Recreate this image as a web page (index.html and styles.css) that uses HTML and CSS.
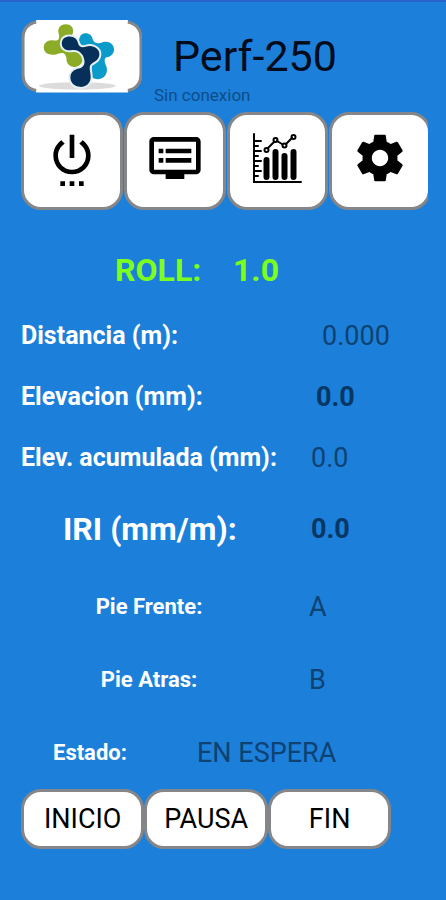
FILE: index.html
```
<!DOCTYPE html>
<html lang="es">
<head>
  <meta charset="UTF-8">
  <meta name="viewport" content="width=device-width, initial-scale=1">
  <title>Perf-250</title>
  <link rel="stylesheet" href="styles.css">
</head>
<body>

  <header class="header">
    <div class="logo">
      <svg viewBox="0 0 120 72" role="img" aria-label="Logo">
        <path class="logo-bg" d="M15 0H106V2Q118 5 118 18V54Q118 67 106 70V72H15V70Q3 67 3 54V18Q3 5 15 2Z"/>
        <path class="logo-edge" d="M15 2Q2 5 2 18V54Q2 67 15 70M106 2Q119 5 119 18V54Q119 67 106 70"/>
        <g transform="translate(17 -2) scale(.33)">
          <ellipse class="logo-shadow" cx="118" cy="204" rx="116" ry="11"/>
          <path class="logo-green" d="M83 19C98 19 107 29 105 42C104 50 100 53 100 60V80L135 110C137 125 132 145 112 147C94 148 85 138 85 122C84 108 76 102 62 107C45 114 20 112 17 92C15 74 30 65 44 67C60 70 66 64 62 48C57 32 66 19 83 19Z"/>
          <path class="logo-cyan" d="M142 46C156 46 162 54 164 64C168 78 182 78 196 72C212 68 228 78 228 94C228 108 218 117 206 118C196 122 200 134 206 148C210 168 198 184 178 184C158 182 152 170 156 154L150 90C124 82 121 72 124 60C128 50 134 46 142 46Z"/>
          <path class="logo-navy" d="M94 56C110 56 118 66 120 76C123 88 132 90 145 86C165 80 185 92 184 110C183 126 172 130 160 138C150 145 158 160 158 178C157 198 142 208 126 207C106 206 96 192 97 176C99 158 112 154 128 150C142 144 142 128 134 112C126 98 112 94 98 97C82 99 71 90 71 76C72 62 82 56 94 56Z"/>
        </g>
      </svg>
    </div>
    <div class="heading">
      <h1>Perf-250</h1>
      <p>Sin conexion</p>
    </div>
  </header>

  <nav class="toolbar">
    <button class="tile" aria-label="Encender">
      <svg viewBox="0 0 24 24"><path d="M7 24h2v-2H7v2zm4 0h2v-2h-2v2zm2-22h-2v10h2V2zm3.560 2.440l-1.450 1.450C16.840 6.940 18 8.830 18 11c0 3.310-2.690 6-6 6s-6-2.690-6-6c0-2.170 1.160-4.060 2.880-5.120L7.440 4.440C5.360 5.880 4 8.280 4 11c0 4.420 3.580 8 8 8s8-3.580 8-8c0-2.720-1.360-5.120-3.440-6.560zM15 24h2v-2h-2v2z"/></svg>
    </button>
    <button class="tile" aria-label="Datos">
      <svg viewBox="0 0 24 24"><path d="M21 3H3c-1.100 0-2 .9-2 2v12c0 1.100.9 2 2 2h5v2h8v-2h5c1.100 0 1.990-.9 1.990-2L23 5c0-1.100-.9-2-2-2zm0 14H3V5h18v12zm-2-9H8v2h11V8zm0 4H8v2h11v-2zM7 8H5v2h2V8zm0 4H5v2h2v-2z"/></svg>
    </button>
    <button class="tile" aria-label="Grafica">
      <svg class="chart" viewBox="0 0 56 56">
        <path class="axis" d="M5 4V52H52"/>
        <path class="ticks" d="M5 11H12M5 16H9M5 21H12M5 26H9M5 31H12M5 36H9M5 41H12M5 46H9"/>
        <path class="bars" d="M17.500 30V47M26.500 22V47M35.500 26V47M44.500 22V47"/>
        <path class="line" d="M19 18L25 12M28 11L33 14M37 14L43 8"/>
        <circle cx="17.500" cy="20" r="2"/>
        <circle cx="26.500" cy="10" r="2"/>
        <circle cx="35.500" cy="15.500" r="2"/>
        <circle cx="44.500" cy="7" r="2"/>
      </svg>
    </button>
    <button class="tile" aria-label="Ajustes">
      <svg viewBox="0 0 24 24"><path d="M19.430 12.980c.04-.32.07-.64.07-.98s-.03-.66-.07-.98l2.110-1.650c.19-.15.24-.42.12-.64l-2-3.460c-.12-.22-.39-.3-.61-.22l-2.490 1c-.52-.4-1.080-.73-1.690-.98l-.38-2.650C14.460 2.180 14.250 2 14 2h-4c-.25 0-.46.18-.49.42l-.38 2.650c-.61.25-1.170.59-1.690.98l-2.490-1c-.23-.09-.49 0-.61.22l-2 3.460c-.13.22-.07.49.12.64l2.110 1.650c-.04.32-.07.65-.07.98s.03.66.07.98l-2.110 1.650c-.19.15-.24.42-.12.64l2 3.460c.12.22.39.3.61.22l2.490-1c.52.4 1.080.73 1.690.98l.38 2.650c.03.24.24.42.49.42h4c.25 0 .46-.18.49-.42l.38-2.650c.61-.25 1.170-.59 1.690-.98l2.490 1c.23.09.49 0 .61-.22l2-3.460c.12-.22.07-.49-.12-.64l-2.110-1.650zM12 15.500c-1.930 0-3.500-1.570-3.500-3.500s1.570-3.500 3.500-3.500 3.500 1.570 3.500 3.500-1.570 3.500-3.500 3.500z"/></svg>
    </button>
  </nav>

  <main>
    <div class="row roll">
      <span class="label">ROLL:</span>
      <span class="value">1.0</span>
    </div>
    <div class="row distancia">
      <span class="label">Distancia (m):</span>
      <span class="value">0.000</span>
    </div>
    <div class="row elevacion">
      <span class="label">Elevacion (mm):</span>
      <span class="value strong">0.0</span>
    </div>
    <div class="row acumulada">
      <span class="label">Elev. acumulada (mm):</span>
      <span class="value">0.0</span>
    </div>
    <div class="row iri">
      <span class="label">IRI (mm/m):</span>
      <span class="value strong">0.0</span>
    </div>
    <div class="row pie">
      <span class="label">Pie Frente:</span>
      <span class="value">A</span>
    </div>
    <div class="row pie">
      <span class="label">Pie Atras:</span>
      <span class="value">B</span>
    </div>
    <div class="row estado">
      <span class="label">Estado:</span>
      <span class="value">EN ESPERA</span>
    </div>
  </main>

  <footer class="actions">
    <button>INICIO</button>
    <button>PAUSA</button>
    <button>FIN</button>
  </footer>

</body>
</html>
```
FILE: styles.css
```
* {
  box-sizing: border-box;
}

body {
  margin: 0;
  min-height: 100vh;
  padding: 18px 18px 0 21px;
  border-top: 2px solid #2962cc;
  background: #1c7fd9;
  font-family: Roboto, sans-serif;
  color: #fff;
}

.header {
  display: flex;
  height: 92px;
}

.logo {
  width: 121px;
}

.logo svg {
  display: block;
  width: 100%;
}

.logo-bg {
  fill: #fff;
}

.logo-edge {
  fill: none;
  stroke: #84868a;
  stroke-width: 3;
}

.logo-shadow {
  fill: #dcdcdc;
}

.logo-green {
  fill: #8cab27;
}

.logo-cyan {
  fill: #0a9bcb;
}

.logo-navy {
  fill: #06305a;
  stroke: #e4f0f4;
  stroke-width: 12;
  paint-order: stroke;
}

.heading {
  padding: 8px 0 0 12px;
}

h1 {
  margin: 0 0 0 19px;
  font-size: 43px;
  line-height: 56px;
  font-weight: 400;
  color: #000c1c;
}

.heading p {
  margin: 0;
  font-size: 17px;
  line-height: 22px;
  color: #0e4d88;
}

.toolbar {
  display: flex;
  overflow: hidden;
}

.toolbar button,
.actions button {
  border: 3px solid #84868a;
  border-radius: 20px;
  background: #fff;
  color: #000;
  cursor: pointer;
}

.tile {
  flex: 0 0 25%;
  height: 98px;
  margin-right: 1px;
  padding: 0 0 6px;
}

.tile svg {
  display: block;
  width: 56px;
  height: 56px;
  margin: 0 auto;
}

.chart path,
.chart circle {
  fill: none;
  stroke: #000;
  stroke-linecap: round;
}

.chart .axis {
  stroke-width: 2;
}

.chart .ticks,
.chart .line,
.chart circle {
  stroke-width: 2;
}

.chart .bars {
  stroke-width: 6;
}

main {
  padding-top: 25px;
}

.row {
  display: flex;
  align-items: center;
  height: 61px;
}

.label {
  font-size: 25px;
  font-weight: 700;
  white-space: nowrap;
}

.value {
  font-size: 27px;
  color: #0e4272;
}

.strong {
  font-weight: 700;
  color: #063765;
}

.roll {
  height: 70px;
  padding-left: 94px;
}

.roll .label,
.roll .value {
  font-size: 32px;
  font-weight: 700;
  color: #7dff1e;
}

.roll .label {
  width: 118px;
}

.distancia .label {
  width: 301px;
}

.elevacion .label {
  width: 295px;
}

.acumulada .label {
  width: 290px;
}

.iri {
  height: 82px;
  padding-left: 42px;
}

.iri .label {
  width: 248px;
  font-size: 32px;
}

.pie,
.estado {
  height: 73px;
}

.pie .label,
.estado .label {
  font-size: 22px;
}

.pie .label {
  width: 256px;
  text-align: center;
}

.pie .value {
  margin-left: 32px;
}

.estado .label {
  width: 176px;
  padding-left: 32px;
}

.actions {
  display: flex;
  width: 91%;
}

.actions button {
  flex: 1;
  height: 60px;
  padding: 0;
  font-family: inherit;
  font-size: 27px;
}
```
